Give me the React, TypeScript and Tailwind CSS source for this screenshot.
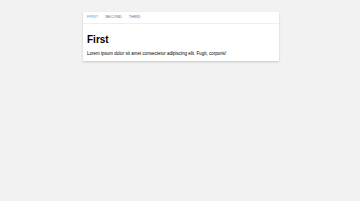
import React from "react";

export default function App() {
  return (
    <div className="min-h-[201px] w-[360px] bg-[#f2f2f2] pt-3" style={{ fontFamily: '"Liberation Sans", Arial, sans-serif' }}>
      <div className="ml-[83px] w-[196px] bg-white shadow-[0_0.5px_2px_rgba(0,0,0,0.18)]">
        <div className="flex h-[11.5px] items-center border-b border-[#eeeeee] px-[0.5px] pt-[2px] text-[3.8px] tracking-[0.05px]">
          <div className="px-[3.5px] text-[#4a9ce0]">FIRST</div>
          <div className="px-[3.5px] text-[#666]">SECOND</div>
          <div className="px-[3.5px] text-[#666]">THIRD</div>
        </div>
        <div className="px-[4px] pb-[4px] pt-[10px]">
          <h1 className="text-[10px] font-bold leading-[12px] text-black">First</h1>
          <p className="mt-[5px] text-[4.5px] leading-[6px] text-black">
            Lorem ipsum dolor sit amet consectetur adipiscing elit. Fugit, corporis!
          </p>
        </div>
      </div>
    </div>
  );
}
